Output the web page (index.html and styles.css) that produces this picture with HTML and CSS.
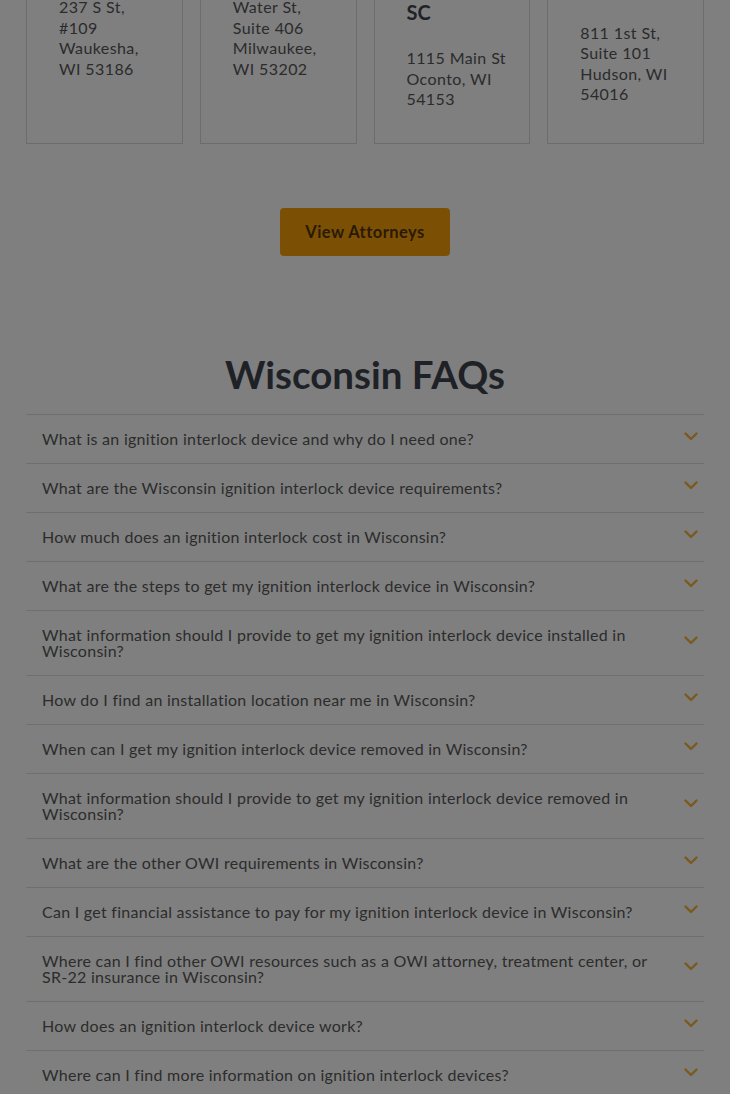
FILE: index.html
```html
<!DOCTYPE html>
<html lang="en">
<head>
<meta charset="utf-8">
<title>Wisconsin Ignition Interlock</title>
<link rel="stylesheet" href="styles.css">
</head>
<body>
<main class="page">
  <section class="attorneys">
    <div class="cards">
      <div class="card">
        <h3 class="card-name">Jones<br>Law</h3>
        <p class="card-addr">237 S St,<br>#109<br>Waukesha,<br>WI 53186</p>
      </div>
      <div class="card">
        <h3 class="card-name">Hart<br>Law</h3>
        <p class="card-addr">Water St,<br>Suite 406<br>Milwaukee,<br>WI 53202</p>
      </div>
      <div class="card">
        <h3 class="card-name">Kohlmann<br>&amp;<br>Bouressa,<br>SC</h3>
        <p class="card-addr">1115 Main St<br>Oconto, WI<br>54153</p>
      </div>
      <div class="card">
        <h3 class="card-name">Meyer<br>Law<br>Office</h3>
        <p class="card-addr">811 1st St,<br>Suite 101<br>Hudson, WI<br>54016</p>
      </div>
    </div>
    <div class="actions">
      <a class="btn" href="#">View Attorneys</a>
    </div>
  </section>

  <section class="faqs">
    <h2 class="faqs-title">Wisconsin FAQs</h2>
    <ul class="faq-list">
      <li class="faq"><span class="faq-q">What is an ignition interlock device and why do I need one?</span><svg class="chev" viewBox="0 0 14 9"><path d="M1.5 1.5 7 7 12.5 1.5"/></svg></li>
      <li class="faq"><span class="faq-q">What are the Wisconsin ignition interlock device requirements?</span><svg class="chev" viewBox="0 0 14 9"><path d="M1.5 1.5 7 7 12.5 1.5"/></svg></li>
      <li class="faq"><span class="faq-q">How much does an ignition interlock cost in Wisconsin?</span><svg class="chev" viewBox="0 0 14 9"><path d="M1.5 1.5 7 7 12.5 1.5"/></svg></li>
      <li class="faq"><span class="faq-q">What are the steps to get my ignition interlock device in Wisconsin?</span><svg class="chev" viewBox="0 0 14 9"><path d="M1.5 1.5 7 7 12.5 1.5"/></svg></li>
      <li class="faq"><span class="faq-q">What information should I provide to get my ignition interlock device installed in Wisconsin?</span><svg class="chev" viewBox="0 0 14 9"><path d="M1.5 1.5 7 7 12.5 1.5"/></svg></li>
      <li class="faq"><span class="faq-q">How do I find an installation location near me in Wisconsin?</span><svg class="chev" viewBox="0 0 14 9"><path d="M1.5 1.5 7 7 12.5 1.5"/></svg></li>
      <li class="faq"><span class="faq-q">When can I get my ignition interlock device removed in Wisconsin?</span><svg class="chev" viewBox="0 0 14 9"><path d="M1.5 1.5 7 7 12.5 1.5"/></svg></li>
      <li class="faq"><span class="faq-q">What information should I provide to get my ignition interlock device removed in Wisconsin?</span><svg class="chev" viewBox="0 0 14 9"><path d="M1.5 1.5 7 7 12.5 1.5"/></svg></li>
      <li class="faq"><span class="faq-q">What are the other OWI requirements in Wisconsin?</span><svg class="chev" viewBox="0 0 14 9"><path d="M1.5 1.5 7 7 12.5 1.5"/></svg></li>
      <li class="faq"><span class="faq-q">Can I get financial assistance to pay for my ignition interlock device in Wisconsin?</span><svg class="chev" viewBox="0 0 14 9"><path d="M1.5 1.5 7 7 12.5 1.5"/></svg></li>
      <li class="faq"><span class="faq-q">Where can I find other OWI resources such as a OWI attorney, treatment center, or SR-22 insurance in Wisconsin?</span><svg class="chev" viewBox="0 0 14 9"><path d="M1.5 1.5 7 7 12.5 1.5"/></svg></li>
      <li class="faq"><span class="faq-q">How does an ignition interlock device work?</span><svg class="chev" viewBox="0 0 14 9"><path d="M1.5 1.5 7 7 12.5 1.5"/></svg></li>
      <li class="faq"><span class="faq-q">Where can I find more information on ignition interlock devices?</span><svg class="chev" viewBox="0 0 14 9"><path d="M1.5 1.5 7 7 12.5 1.5"/></svg></li>
    </ul>
  </section>
</main>
</body>
</html>
```

FILE: styles.css
```css
* { box-sizing: border-box; }

html, body {
  margin: 0;
  padding: 0;
  background: #7f7f7f;
}

body {
  font-family: "Lato", "Open Sans", sans-serif;
  color: #2b2b2b;
  overflow: hidden;
}

.page {
  margin-top: -110px;
  padding: 0 26px;
}

.cards {
  display: grid;
  grid-template-columns: repeat(4, minmax(0, 1fr));
  gap: 17px;
}

.card {
  border: 1px solid #6c6c6c;
  padding: 32px 32px 33px;
}

.card-name {
  margin: 0 0 23px;
  font-size: 20px;
  line-height: 25.5px;
  font-weight: 700;
  white-space: nowrap;
  color: #1f2227;
}

.card-addr {
  margin: 0;
  font-size: 16px;
  line-height: 20.5px;
  letter-spacing: 0.4px;
  white-space: nowrap;
  color: #2b2b2b;
}

.actions {
  display: flex;
  justify-content: center;
  margin-top: 64px;
}

.btn {
  display: flex;
  align-items: center;
  justify-content: center;
  width: 170px;
  height: 48px;
  border-radius: 4px;
  background: #7c5004;
  color: #2a1a04;
  font-weight: 700;
  font-size: 16.5px;
  letter-spacing: 0.45px;
  text-decoration: none;
}

.faqs {
  margin-top: 95px;
}

.faqs-title {
  margin: 0 0 17px;
  text-align: center;
  font-size: 38.5px;
  line-height: 46px;
  font-weight: 700;
  color: #1e2227;
}

.faq-list {
  list-style: none;
  margin: 0;
  padding: 0;
  border-top: 1px solid #6f6f6f;
}

.faq {
  display: flex;
  align-items: center;
  justify-content: space-between;
  gap: 30px;
  padding: 16px 6px 16px 16px;
  border-bottom: 1px solid #6f6f6f;
}

.faq-q {
  font-size: 16px;
  line-height: 16px;
  letter-spacing: 0.27px;
  color: #2c2c2c;
}

.chev {
  flex: none;
  width: 14px;
  height: 9px;
  margin-bottom: 5px;
  fill: none;
  stroke: #7a5a1e;
  stroke-width: 2.4;
  stroke-linecap: round;
  stroke-linejoin: round;
}
```
